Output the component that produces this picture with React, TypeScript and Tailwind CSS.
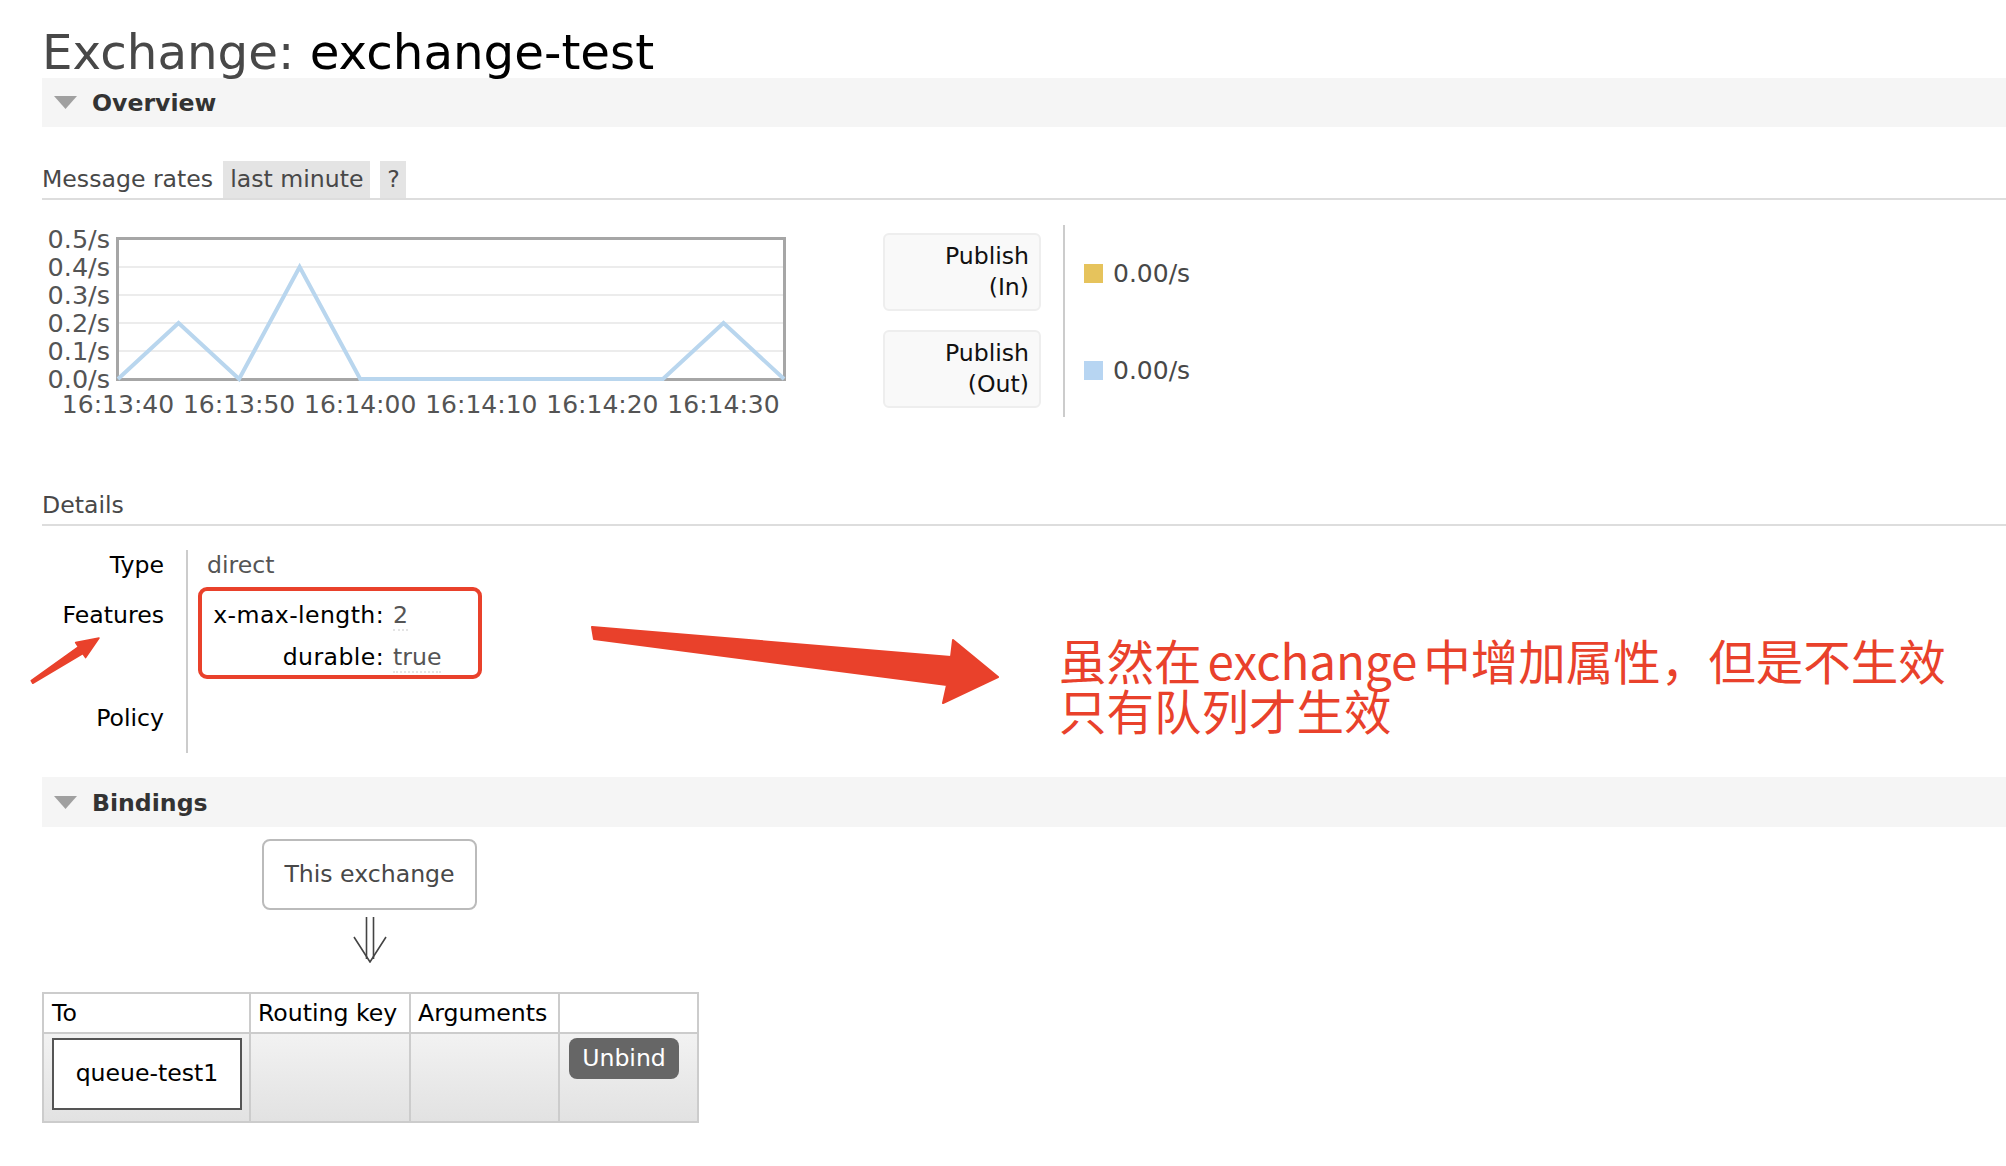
import React from "react";

const vals = [0, 0.2, 0, 0.4, 0, 0, 0, 0, 0, 0, 0.2, 0];
const px = (i: number) => 76 + i * 60.55;
const py = (v: number) => 161 - v * 280;

function Chart() {
  const pts = vals.map((v, i) => `${px(i)},${py(v)}`).join(" ");
  const yLabels = [0.5, 0.4, 0.3, 0.2, 0.1, 0];
  const xLabels = ["16:13:40", "16:13:50", "16:14:00", "16:14:10", "16:14:20", "16:14:30"];
  return (
    <svg width="760" height="200" className="mt-[-7px] shrink-0" style={{ fontFamily: "'DejaVu Sans', Verdana, sans-serif" }}>
      {[0.1, 0.2, 0.3, 0.4].map((v) => (
        <line key={v} x1="76" x2="742" y1={py(v)} y2={py(v)} stroke="#ececec" strokeWidth="2" />
      ))}
      <rect x="75.5" y="20.5" width="667" height="141" fill="none" stroke="#a6a6a6" strokeWidth="3" />
      <polyline points={pts} fill="none" stroke="#b9d6ee" strokeWidth="4" strokeLinejoin="miter" />
      {yLabels.map((v) => (
        <text key={v} x="68" y={py(v) + 9} textAnchor="end" fontSize="25.5" fill="#545454">
          {v.toFixed(1)}/s
        </text>
      ))}
      {xLabels.map((l, k) => (
        <text key={l} x={px(k * 2)} y="195" textAnchor="middle" fontSize="25" fill="#545454">
          {l}
        </text>
      ))}
    </svg>
  );
}

function SectionBar({ title }: { title: string }) {
  return (
    <div className="flex h-full items-center bg-[#f5f5f5] pl-[12px]">
      <svg width="23" height="13" className="shrink-0">
        <polygon points="0,0 23,0 11.5,13" fill="#a0a0a0" />
      </svg>
      <span className="ml-[15px] mt-[3px] font-bold text-[#333]">{title}</span>
    </div>
  );
}

function PublishBox({ a, b }: { a: string; b: string }) {
  return (
    <div className="flex h-[78px] w-[158px] flex-col items-end justify-center rounded-[6px] border-2 border-[#eeeeee] bg-[#f9f9f9] pr-[10px] leading-[31px] text-[#111]">
      <span>{a}</span>
      <span>{b}</span>
    </div>
  );
}

function Legend({ color }: { color: string }) {
  return (
    <div className="flex h-[78px] items-center pt-[3px]">
      <div className={`h-[19px] w-[19px] ${color}`} />
      <span className="ml-[10px] text-[25px] text-[#484848]">0.00/s</span>
    </div>
  );
}

export default function App() {
  return (
    <div className="relative h-[1166px] w-[2006px] overflow-hidden bg-white pl-[42px] font-['DejaVu_Sans',Verdana,sans-serif] text-[23.6px] text-[#484848]">
      <h1 className="mt-[26px] h-[52px] whitespace-nowrap text-[48.3px] leading-[52px] font-normal">
        Exchange: <span className="text-black">exchange-test</span>
      </h1>
      <div className="h-[49px]">
        <SectionBar title="Overview" />
      </div>

      <div className="mt-[34px] flex h-[39px] items-stretch border-b-2 border-[#dddddd]">
        <span className="leading-[37px]">Message rates</span>
        <span className="ml-[10px] bg-[#e4e4e4] px-[7px] leading-[37px]">last minute</span>
        <span className="ml-[10px] w-[26px] bg-[#e4e4e4] text-center leading-[37px]">?</span>
      </div>

      <div className="mt-[25px] flex items-start">
        <Chart />
        <div className="ml-[81px] flex">
          <div className="flex flex-col gap-[19px] pb-[9px] pt-[8px]">
            <PublishBox a="Publish" b="(In)" />
            <PublishBox a="Publish" b="(Out)" />
          </div>
          <div className="ml-[22px] w-[2px] bg-[#cccccc]" />
          <div className="ml-[19px] flex flex-col gap-[19px] pt-[8px]">
            <Legend color="bg-[#e6c35c]" />
            <Legend color="bg-[#b7d5f2]" />
          </div>
        </div>
      </div>

      <div className="mt-[69px] flex h-[39px] items-center border-b-2 border-[#dddddd]">
        <span className="leading-[37px]">Details</span>
      </div>

      <div className="mt-[24px] flex">
        <div className="w-[144px] pb-[20px] pr-[22px] text-right text-black">
          <div className="h-[30px] leading-[30px]">Type</div>
          <div className="mt-[14px] h-[42px] leading-[42px]">Features</div>
          <div className="h-[42px]" />
          <div className="mt-[25px] h-[30px] leading-[30px]">Policy</div>
        </div>
        <div className="w-[2px] bg-[#cccccc]" />
        <div className="pl-[19px]">
          <div className="h-[30px] leading-[30px] text-[#555]">direct</div>
          <div className="ml-[-9px] mt-[7px] h-[92px] w-[284px] rounded-[9px] border-4 border-[#e9412b] pl-[8px] pt-[3px]">
            <div className="grid grid-cols-[174px_auto] gap-x-[9px]">
              <div className="h-[42px] text-right leading-[42px] tracking-[0.4px] text-black">x-max-length:</div>
              <div className="h-[42px] leading-[42px] text-[#555]">
                <span className="border-b-2 border-dotted border-[#e4e4e4]">2</span>
              </div>
              <div className="h-[42px] text-right leading-[42px] tracking-[0.4px] text-black">durable:</div>
              <div className="h-[42px] leading-[42px] text-[#555]">
                <span className="border-b-2 border-dotted border-[#e4e4e4]">true</span>
              </div>
            </div>
          </div>
        </div>
      </div>

      <div className="mt-[24px] h-[50px]">
        <SectionBar title="Bindings" />
      </div>

      <div className="ml-[220px] mt-[12px] flex w-[215px] flex-col items-center">
        <div className="flex h-[71px] w-[215px] items-center justify-center rounded-[8px] border-2 border-[#bbbbbb]">
          This exchange
        </div>
        <svg width="40" height="46" className="mt-[7px]">
          <line x1="16.5" y1="0" x2="16.5" y2="42" stroke="#444" strokeWidth="1.6" />
          <line x1="23.5" y1="0" x2="23.5" y2="42" stroke="#444" strokeWidth="1.6" />
          <polyline points="4,20 20,45 36,20" fill="none" stroke="#444" strokeWidth="1.6" />
        </svg>
      </div>

      <div className="mt-[29px] w-[657px] border-2 border-[#cccccc] text-black">
        <div className="grid grid-cols-[207px_160px_149px_137px] border-b-2 border-[#cccccc] bg-white">
          <div className="h-[38px] border-r-2 border-[#cccccc] pl-[8px] leading-[38px]">To</div>
          <div className="h-[38px] border-r-2 border-[#cccccc] pl-[7px] leading-[38px]">Routing key</div>
          <div className="h-[38px] border-r-2 border-[#cccccc] pl-[7px] leading-[38px]">Arguments</div>
          <div className="h-[38px]" />
        </div>
        <div className="grid grid-cols-[207px_160px_149px_137px] bg-gradient-to-b from-[#f2f2f2] to-[#e2e2e2]">
          <div className="h-[87px] border-r-2 border-[#cccccc] pl-[8px] pt-[4px]">
            <div className="flex h-[72px] w-[190px] items-center justify-center border-2 border-[#555555] bg-white">
              queue-test1
            </div>
          </div>
          <div className="h-[87px] border-r-2 border-[#cccccc]" />
          <div className="h-[87px] border-r-2 border-[#cccccc]" />
          <div className="h-[87px] pl-[9px] pt-[4px]">
            <div className="flex h-[41px] w-[110px] items-center justify-center rounded-[8px] bg-[#666666] text-white">
              Unbind
            </div>
          </div>
        </div>
      </div>

      <svg className="pointer-events-none absolute left-0 top-0" width="2006" height="1166">
        <polygon
          points="592,627 951,657 953,640 998,677 943,703 947,685 594,639"
          fill="#e9412b"
          stroke="#e9412b"
          strokeWidth="2"
          strokeLinejoin="round"
        />
        <polygon
          points="31.2,680.7 78.4,646.8 75.6,642.6 99,638 85.6,657.6 82.8,653.5 32.8,683.3"
          fill="#e9412b"
          stroke="#e9412b"
          strokeWidth="1.5"
          strokeLinejoin="round"
        />
      </svg>

      <div className="absolute left-[1059px] top-[635px] whitespace-nowrap font-['Noto_Sans_CJK_SC',sans-serif] text-[47.5px] leading-[50px] text-[#e9412b]">
        <div>
          虽然在<span className="mx-[6px]">exchange</span>中增加属性，但是不生效
        </div>
        <div>只有队列才生效</div>
      </div>
    </div>
  );
}
